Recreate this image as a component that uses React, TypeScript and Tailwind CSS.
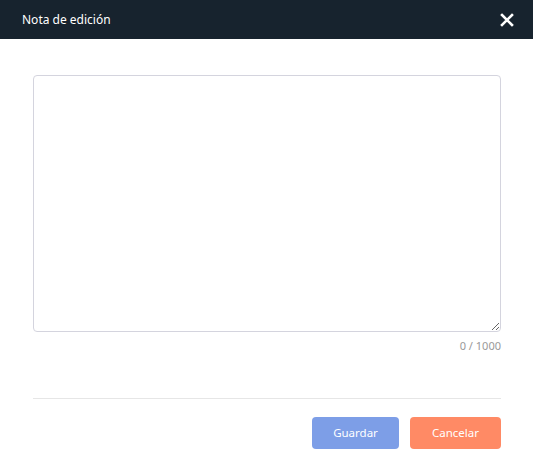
export default function App() {
  return (
    <div className="w-[533px] h-[464px] bg-white flex flex-col font-['Noto_Sans',sans-serif]">
      <header className="h-[39px] shrink-0 bg-[#17232e] flex items-center pl-[22px] pr-[19px]">
        <h1 className="text-[12px] text-white">Nota de edición</h1>
        <button className="ml-auto text-white">
          <svg width="14" height="14" viewBox="0 0 14 14" fill="none" stroke="currentColor" strokeWidth="2.6" strokeLinecap="square">
            <path d="M2 2L12 12M12 2L2 12" />
          </svg>
        </button>
      </header>

      <main className="flex-1 flex flex-col pl-[33px] pr-[32px] pt-[36px]">
        <textarea className="h-[257px] w-full border border-[#d4d4de] rounded-[4px] outline-none p-2 text-[13px]" />
        <div className="text-right text-[11px] text-[#999999] mt-[6px]">0 / 1000</div>
        <div className="border-t border-[#e6e6e6] mt-[43px]" />
        <div className="flex justify-end gap-[11px] mt-[18px]">
          <button className="w-[87px] h-[32px] rounded-[4px] bg-[#7d9ee7] text-white text-[11.5px]">Guardar</button>
          <button className="w-[91px] h-[32px] rounded-[4px] bg-[#ff8a65] text-white text-[11.5px]">Cancelar</button>
        </div>
      </main>
    </div>
  );
}
